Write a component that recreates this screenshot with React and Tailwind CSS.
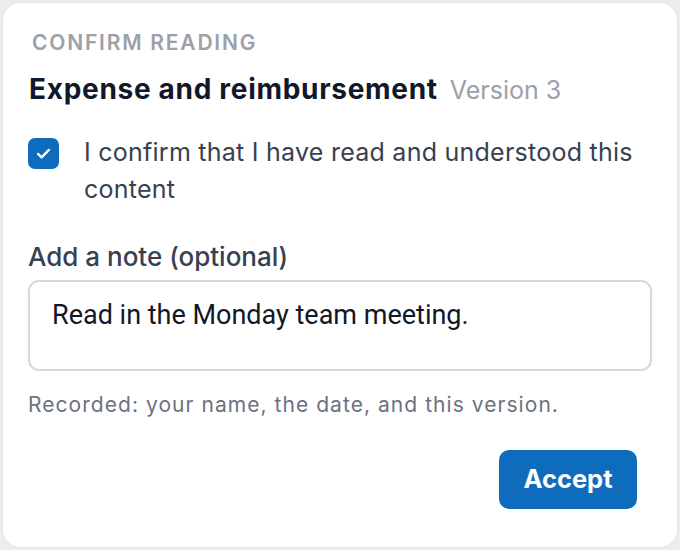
import React, { useState } from "react";

const App = () => {
  const [checked, setChecked] = useState(true);
  const [note, setNote] = useState("Read in the Monday team meeting.");

  return (
    <div className="w-[680px] h-[550px] bg-[#ececee] p-[2px] font-['Inter',sans-serif]">
      <div className="h-full bg-white rounded-[18px] border border-[#e3e3e6] pl-[25px] pr-[25px] pt-[27px]">
        <div className="text-[21px] font-semibold tracking-[0.085em] text-[#9ca0a8] leading-[26px] pl-[4px]">
          CONFIRM READING
        </div>

        <div className="flex items-baseline gap-[12px] mt-[16px] pl-[1px]">
          <h2 className="text-[28px] font-bold tracking-[0.025em] text-[#111827] leading-[34px]">
            Expense and reimbursement
          </h2>
          <span className="text-[25px] text-[#9ca0a8]">Version 3</span>
        </div>

        <label className="flex items-start gap-[25px] mt-[24px] cursor-pointer">
          <button
            type="button"
            onClick={() => setChecked(!checked)}
            className={`mt-[4px] w-[31px] h-[31px] shrink-0 rounded-[7px] flex items-center justify-center ${
              checked ? "bg-[#0f6cbd]" : "bg-white border border-[#d1d5db]"
            }`}
          >
            {checked && (
              <svg width="19" height="19" viewBox="0 0 16 16" fill="none">
                <path d="M3.4 8.4l3 2.9L12.6 5" stroke="white" strokeWidth="2" strokeLinecap="round" strokeLinejoin="round" />
              </svg>
            )}
          </button>
          <span className="text-[25px] tracking-[0.01em] text-[#374151] leading-[37px]">
            I confirm that I have read and understood this content
          </span>
        </label>

        <div className="text-[26px] font-medium text-[#374151] mt-[33px] leading-[32px]">Add a note (optional)</div>

        <textarea
          value={note}
          onChange={(e) => setNote(e.target.value)}
          className="block w-full h-[91px] mt-[7px] rounded-[11px] border-2 border-[#d7d8db] pl-[22px] pr-[22px] pt-[17px] text-[27px] leading-[32px] text-[#111827] resize-none outline-none font-['Roboto',sans-serif]"
        />

        <div className="text-[21px] tracking-[0.05em] text-[#6b7280] mt-[20px] leading-[28px]">
          Recorded: your name, the date, and this version.
        </div>

        <div className="flex justify-end mt-[31px] pr-[15px]">
          <button className="w-[138px] h-[59px] rounded-[10px] bg-[#0f6cbd] text-white text-[25.5px] font-bold">
            Accept
          </button>
        </div>
      </div>
    </div>
  );
};

export default App;
